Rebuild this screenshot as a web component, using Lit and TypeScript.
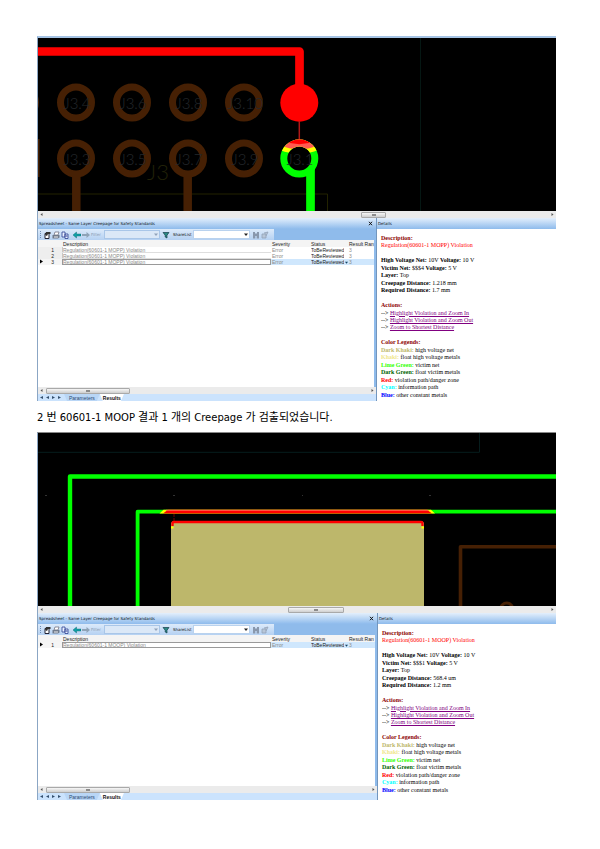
import { LitElement, html, svg, css, nothing } from "lit";
import { customElement, property } from "lit/decorators.js";
import { classMap } from "lit/directives/class-map.js";

interface Violation {
  text: string;
  severity: string;
  status: string;
  rank: string;
}

interface Detail {
  rule: string;
  victim: string;
  creepage: string;
  required: string;
}

const LEGENDS = [
  ["Dark Khaki:", "high voltage net", "darkkhaki"],
  ["Khaki:", "float high voltage metals", "khaki"],
  ["Lime Green:", "victim net", "lime"],
  ["Dark Green:", "float victim metals", "green"],
  ["Red:", "violation path/danger zone", "red"],
  ["Cyan:", "information path", "cyan"],
  ["Blue:", "other constant metals", "blue"],
];

@customElement("scroll-strip")
class ScrollStrip extends LitElement {
  @property({ type: Number }) start = 0;
  @property({ type: Number }) size = 10;

  static styles = css`
    :host { display: flex; align-items: center; box-sizing: border-box; height: 7px; padding: 0 2px; background: #ebebeb; }
    .arrow { flex: none; width: 3px; height: 3px; fill: #555; }
    .track { flex: 1; height: 6px; margin: 0 3px; }
    .thumb { display: flex; justify-content: center; align-items: center; box-sizing: border-box; height: 6px; border: 1px solid #a9a9a9; border-radius: 1px; background: linear-gradient(#f6f6f6, #cfcfcf); }
    .grip { width: 4px; height: 2px; background: #8c8c8c; }
  `;

  render() {
    return html`
      <svg class="arrow" viewBox="0 0 3 3"><path d="M2.5 0v3L.5 1.5z" /></svg>
      <div class="track">
        <div class="thumb" style="margin-left:${this.start}%;width:${this.size}%"><span class="grip"></span></div>
      </div>
      <svg class="arrow" viewBox="0 0 3 3"><path d="M.5 0v3l2-1.5z" /></svg>
    `;
  }
}

@customElement("violation-sheet")
class ViolationSheet extends LitElement {
  @property({ attribute: false }) rows: Violation[] = [];
  @property() key = "a";

  static styles = css`
    :host { display: flex; flex-direction: column; min-width: 0; background: #8fbbeb; font: 5px/6px "Liberation Sans", sans-serif; color: #222; }
    button, select { font: inherit; color: inherit; margin: 0; padding: 0; border: 0; background: none; border-radius: 0; }
    .title { display: flex; justify-content: space-between; align-items: center; height: 11px; padding: 0 3px 0 1px; background: linear-gradient(#e3effc, #8ebbec); }
    h2 { margin: 0; font: 4px/6px "DejaVu Sans", sans-serif; color: #0c1626; }
    .close { display: flex; width: 5px; height: 5px; }
    svg { display: block; width: 100%; height: 100%; }
    .toolbar { display: flex; align-items: center; box-sizing: border-box; width: 236px; height: 11px; padding-left: 2px; background: linear-gradient(#dceafa, #b5d1f2); }
    .tool { flex: none; width: 8px; height: 8px; margin-right: 1px; }
    .grip { flex: none; width: 1px; height: 7px; margin-right: 1px; border-left: 1px dotted #6d8cb5; }
    .gap { margin-left: 3px; }
    .muted { color: #8b9bb0; }
    .label { flex: none; margin-right: 1px; font: 4px/6px "DejaVu Sans", sans-serif; }
    .filter { width: 12px; }
    .share { width: 19px; color: #111; }
    .combo { display: flex; align-items: center; box-sizing: border-box; height: 9px; border: 1px solid #b9d2ee; background: #fff; }
    .combo.off { background: #dbe8f7; border-color: #a9c6e8; }
    .combo select { flex: 1; min-width: 0; height: 7px; appearance: none; outline: 0; }
    .combo .caret { flex: none; width: 4px; height: 3px; margin-right: 1px; }
    .filter-box { width: 56px; }
    .share-box { width: 57px; margin-right: 2px; }
    .funnel { margin: 0 3px 0 2px; }
    .sheet { flex: 1; margin-right: 2px; background: #fff; overflow: hidden; }
    table { width: 100%; table-layout: fixed; border-collapse: separate; border-spacing: 0; }
    th, td { padding: 0 0 0 1px; font-weight: 400; text-align: left; white-space: nowrap; overflow: hidden; line-height: 6px; height: 6px; }
    thead th { height: 7px; background: #f4f4f4; }
    .c0 { width: 23px; }
    .c1 { width: 208px; }
    .c2 { width: 38px; }
    .c3 { width: 37px; }
    tbody th { background: #eeeeee; padding: 0 2px; }
    .number { display: flex; justify-content: space-between; padding-right: 6px; }
    .mark { width: 3px; height: 5px; }
    .violation, .pale { color: #8a8a8a; }
    tbody td.violation { box-shadow: inset 0 -1px #dedede, inset 1px 0 #c8c8c8; }
    .selected td { background: #cfe7fd; }
    .selected th { background: #f5f5f5; }
    .selected td.violation { background: #fff; box-shadow: inset 0 0 0 1px #9a9a9a; }
    .state { display: flex; align-items: center; justify-content: space-between; }
    .state .text { overflow: hidden; }
    .state .drop { flex: none; width: 3px; height: 3px; }
    .tabs { display: flex; align-items: center; height: 7px; padding-left: 2px; background: #cbe3fd; }
    .nav { width: 3px; height: 3px; margin-right: 3px; }
    .tab { height: 7px; padding: 0 5px; color: #2b4a72; background: #b9d6f6; line-height: 6px; clip-path: polygon(0 0, 100% 0, calc(100% - 3px) 100%, 3px 100%); }
    .tab.current { color: #111; background: #fff; font-weight: 700; padding: 0 3px; }
  `;

  private caret(color: string) {
    return html`<svg viewBox="0 0 4 3"><path d="M0 .5h4L2 3z" fill=${color} /></svg>`;
  }

  render() {
    return html`
      <div class="title">
        <h2>Spreadsheet - Same Layer Creepage for Safety Standards</h2>
        <button class="close" aria-label="Close"><svg viewBox="0 0 5 5"><path d="M1 .8l3 3.4M4 .8L1 4.2" stroke="#111" /></svg></button>
      </div>
      <div class="toolbar">
        <span class="grip"></span>
        <button class="tool" aria-label="Properties"><svg viewBox="0 0 8 8"><path d="M2 2.5h4v5H2z" fill="#fff" stroke="#223" /><path d="M3 1h4.5v2H5L4 5 2 4z" fill="#333" /></svg></button>
        <button class="tool" aria-label="Print"><svg viewBox="0 0 8 8"><path d="M2 4l1-3h4L6 4z" fill="#fff" stroke="#667" stroke-width=".7" /><path d="M.5 4h7v2.5L6 7.5H.5z" fill="#707b8c" /><path d="M2 6h4" stroke="#eee" /></svg></button>
        <button class="tool" aria-label="Copy"><svg viewBox="0 0 8 8"><path d="M1 1h3v5H1zM4 3h3v4.500H4z" fill="#eaf1ff" stroke="#2b3f91" stroke-width=".8" /><path d="M5 5h1.500" stroke="#2b3f91" /></svg></button>
        <button class="tool gap" aria-label="Back"><svg viewBox="0 0 8 8"><path d="M0 4l3.500-3v2H8v2H3.500v2z" fill="#11a0a8" stroke="#066" stroke-width=".4" /></svg></button>
        <button class="tool" aria-label="Forward"><svg viewBox="0 0 8 8"><path d="M8 4L4.500 1v2H0v2h4.500v2z" fill="#8fa3b7" /></svg></button>
        <label class="label filter muted" for="filter-${this.key}">Filter</label>
        <span class="combo off filter-box"><select id="filter-${this.key}" disabled></select><span class="caret">${this.caret("#91a3ba")}</span></span>
        <button class="tool funnel" aria-label="Apply filter"><svg viewBox="0 0 8 8"><path d="M1 1.500h6L5 4.200V7L3.200 6v-1.800z" fill="#2c8b83" stroke="#143c4c" stroke-width=".7" /></svg></button>
        <label class="label share" for="share-${this.key}">ShareList</label>
        <span class="combo share-box"><select id="share-${this.key}"></select><span class="caret">${this.caret("#222")}</span></span>
        <button class="tool" aria-label="Find"><svg viewBox="0 0 8 8"><path d="M1 1h2v1.500h2V1h2v6.500H4.700V5H3.300v2.500H1z" fill="#8998ad" /></svg></button>
        <button class="tool" aria-label="Mark"><svg viewBox="0 0 8 8"><path d="M1 3h4v4H1zM3 2l4-1-2 4" fill="#b8c6d8" stroke="#92a2b8" stroke-width=".8" /></svg></button>
      </div>
      <div class="sheet">
        <table>
          <thead>
            <tr><th class="c0"></th><th class="c1">Description</th><th class="c2">Severity</th><th class="c3">Status</th><th>Result Ran</th></tr>
          </thead>
          <tbody>
            ${this.rows.map((r, i) => {
              const selected = i === this.rows.length - 1;
              return html`<tr class=${classMap({ selected })}>
                <th scope="row"><div class="number">
                  <span class="mark">${selected ? html`<svg viewBox="0 0 3 5"><path d="M0 .5v4l3-2z" fill="#000" /></svg>` : nothing}</span>
                  <span>${i + 1}</span>
                </div></th>
                <td class="violation">${r.text}</td>
                <td class="pale">${r.severity}</td>
                <td><div class="state"><span class="text">${r.status}</span>${selected ? html`<span class="drop">${this.caret("#146")}</span>` : nothing}</div></td>
                <td class="pale">${r.rank}</td>
              </tr>`;
            })}
          </tbody>
        </table>
      </div>
      <scroll-strip .start=${0} .size=${26}></scroll-strip>
      <div class="tabs">
        ${["M3 0v3L0 1.500z", "M3 0v3L0 1.500z", "M0 0v3l3-1.500z", "M0 0v3l3-1.500z"].map(
          (d) => html`<span class="nav"><svg viewBox="0 0 3 3"><path d=${d} fill="#35506f" /></svg></span>`
        )}
        <button class="tab">Parameters</button><button class="tab current">Results</button>
      </div>
    `;
  }
}

@customElement("violation-details")
class ViolationDetails extends LitElement {
  @property({ attribute: false }) detail!: Detail;

  static styles = css`
    :host { display: flex; flex-direction: column; border-left: 1px solid #7396bd; box-sizing: border-box; background: #fff; }
    h2 { margin: 0; height: 11px; padding-left: 1px; background: linear-gradient(#e3effc, #8ebbec); color: #0c1626; font: 4px/11px "DejaVu Sans", sans-serif; }
    .body { display: grid; grid-auto-rows: 1fr; height: 164px; padding: 6px 0 0 4px; color: #000; font: 6px/7px "Liberation Serif", serif; white-space: nowrap; }
    p { margin: 0; }
    .head { color: #8b0000; font-weight: 700; }
    .rule { color: #ff0000; }
    a { color: #800080; }
    .darkkhaki { color: #bdb76b; }
    .khaki { color: #f0e68c; }
    .lime { color: #32ff00; }
    .green { color: #006400; }
    .red { color: #ff0000; }
    .cyan { color: #00ffff; }
    .blue { color: #0000ff; }
  `;

  render() {
    const d = this.detail;
    return html`
      <h2>Details</h2>
      <div class="body">
        <p class="head">Description:</p>
        <p class="rule">${d.rule}</p>
        <p></p>
        <p><b>High Voltage Net:</b> 10V <b>Voltage:</b> 10 V</p>
        <p><b>Victim Net:</b> ${d.victim} <b>Voltage:</b> 5 V</p>
        <p><b>Layer:</b> Top</p>
        <p><b>Creepage Distance:</b> ${d.creepage}</p>
        <p><b>Required Distance:</b> ${d.required}</p>
        <p></p>
        <p class="head">Actions:</p>
        ${["Highlight Violation and Zoom In", "Highlight Violation and Zoom Out", "Zoom to Shortest Distance"].map(
          (t) => html`<p>--&gt; <a href="#">${t}</a></p>`
        )}
        <p></p>
        <p class="head">Color Legends:</p>
        ${LEGENDS.map(([name, text, tone]) => html`<p><b class=${tone}>${name}</b> ${text}</p>`)}
      </div>
    `;
  }
}

const ring = (x: number, y: number, label: string) => svg`
  <circle class="ring" cx=${x} cy=${y} r="15.500" />
  <text class="pin" x=${x + 1} y=${y + 6}>${label}</text>`;

const padBoard = html`
  <svg class="board" viewBox="38 38 518 173" role="img" aria-label="Connector J3 pads">
    <defs>
      <clipPath id="ring-top">
        <path clip-rule="evenodd" d="M280.300 158.500a19 19 0 0 1 38 0a19 19 0 0 1 -38 0zM287.300 158.500a12 12 0 0 1 24 0a12 12 0 0 1 -24 0z" />
      </clipPath>
    </defs>
    <path d="M38 194H327.500V211" fill="none" stroke="#222200" />
    <path d="M420.500 38V211" stroke="#051713" />
    <text class="ref" x="158" y="180">J3</text>
    ${[20, 76, 132, 188, 244].map((x, i) => [
      ring(x, 102.5, i ? "J3." + (2 + i * 2) : ""),
      ring(x, 158.5, i ? "J3." + (1 + i * 2) : ""),
    ])}
    <path d="M76.300 176V211M187.700 176V211" class="trace" />
    <path d="M38.500 139V177" stroke="#462004" stroke-width="2" />
    <path d="M38 51.500H299.500V103" fill="none" stroke="#f00" stroke-width="8.700" stroke-linejoin="round" />
    <circle cx="299.300" cy="102.700" r="19" fill="#f00" />
    <path d="M299.300 121V140" stroke="#b01818" stroke-width="1.500" />
    <path d="M310.500 167V211" stroke="#0f0" stroke-width="8.700" />
    <circle cx="299.300" cy="158.500" r="15.500" fill="#000" stroke="#0f0" stroke-width="7" />
    <text class="pin" x="300" y="164.500">J3.1</text>
    <g clip-path="url(#ring-top)">
      <circle cx="299.300" cy="102.700" r="51" fill="#ff0" />
      <circle cx="299.300" cy="102.700" r="46.500" fill="#ff5a50" />
      <circle cx="299.300" cy="102.700" r="41.500" fill="#f00" />
    </g>
  </svg>`;

const planeBoard = html`
  <svg class="board" viewBox="38 433 518 173" role="img" aria-label="Copper plane edge">
    <path d="M38 452.300H479.500V433" fill="none" stroke="#061d1d" />
    <path d="M45 495.500h2M173 495.500h2M302 495.500h1M429 495.500h2" stroke="#333" />
    <path d="M556 476.500H70V606" fill="none" stroke="#0f0" stroke-width="4.400" stroke-linejoin="round" />
    <path d="M556 511.700H137.600V606" fill="none" stroke="#0f0" stroke-width="3.800" stroke-linejoin="round" />
    <path d="M159.500 513.600L163.500 509.800H431L435 513.600z" fill="#ff0" />
    <path d="M163 513.600L168 509.800H427L432 513.600z" fill="#f00" />
    <path d="M166 510.300H428.500" stroke="#ff6a50" stroke-width="1" />
    <path d="M174 514V521" stroke="#700" stroke-dasharray="3 1" />
    <path d="M171 606V523L173 521H422L424 523V606z" fill="#bdb76b" />
    <path d="M172.500 526V523.500Q172.500 522 174 522H421Q422.500 522 422.500 523.500V526" fill="none" stroke="#f00" stroke-width="2.400" />
    <path d="M171 527.500h2.500M421.500 527.500h2.500" stroke="#ff0" stroke-width="2" />
    <path d="M556 546.800H460.500V606" fill="none" stroke="#462004" stroke-width="3.600" stroke-linejoin="round" />
    <circle cx="506.700" cy="609" r="6" fill="none" stroke="#462004" stroke-width="3" />
  </svg>`;

@customElement("app-root")
class AppRoot extends LitElement {
  static styles = css`
    :host { display: block; box-sizing: border-box; min-height: 100vh; padding: 36px 44px 48px 37px; background: #fff; }
    .window { overflow: hidden; border-left: 1px solid #8ba6c4; }
    .first { border-top: 2px solid #a5c3e4; }
    .second { border-top: 1px solid #888; }
    .board { display: block; width: 100%; height: auto; background: #000; }
    .ring { fill: #000; stroke: #462004; stroke-width: 7; }
    .trace { stroke: #462004; stroke-width: 8.500; }
    .pin, .ref { font-family: Lato, "Liberation Sans", sans-serif; font-weight: 300; text-anchor: middle; fill: #24282c; }
    .pin { font-size: 15px; }
    .ref { font-size: 22px; fill: #222208; }
    .dock { display: grid; grid-template-columns: minmax(0, 1fr) 180px; }
    .first .dock { height: 183px; }
    .second .dock { height: 187px; grid-template-columns: minmax(0, 1fr) 179px; }
    .caption { margin: 0; padding: 8px 0 7px; font: 10px/15px "DejaVu Sans", "Noto Sans CJK KR", sans-serif; color: #000; }
    .hangul { font: 11px/15px "Noto Sans CJK KR", sans-serif; }
  `;

  render() {
    const row = (text: string): Violation => ({ text, severity: "Error", status: "ToBeReviewed", rank: "3" });
    const mopp = "Regulation(60601-1 MOPP) Violation";
    const moop = "Regulation(60601-1 MOOP) Violation";
    return html`
      <section class="window first">
        ${padBoard}
        <scroll-strip .start=${62.8} .size=${5}></scroll-strip>
        <div class="dock">
          <violation-sheet key="mopp" .rows=${[row(mopp), row(mopp), row(mopp)]}></violation-sheet>
          <violation-details .detail=${{ rule: mopp, victim: "$$$4", creepage: "1.218 mm", required: "1.7 mm" }}></violation-details>
        </div>
      </section>
      <p class="caption">2<span class="hangul" lang="ko"> 번 </span>60601-1 MOOP<span class="hangul" lang="ko"> 결과 </span>1<span class="hangul" lang="ko"> 개의 </span>Creepage<span class="hangul" lang="ko"> 가 검출되었습니다</span>.</p>
      <section class="window second">
        ${planeBoard}
        <scroll-strip .start=${48.3} .size=${11}></scroll-strip>
        <div class="dock">
          <violation-sheet key="moop" .rows=${[row(moop)]}></violation-sheet>
          <violation-details .detail=${{ rule: moop, victim: "$$$1", creepage: "568.4 um", required: "1.2 mm" }}></violation-details>
        </div>
      </section>
    `;
  }
}
